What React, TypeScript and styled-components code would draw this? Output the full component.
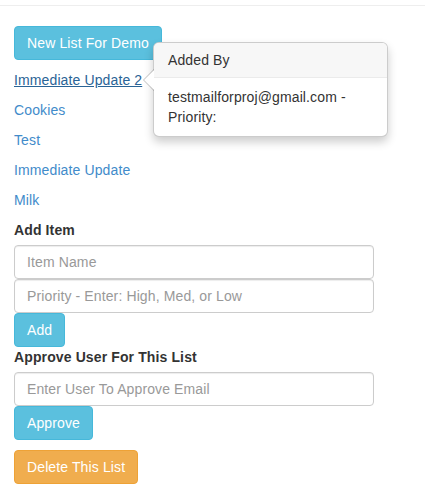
import styled, {createGlobalStyle} from 'styled-components';

const GlobalStyle = createGlobalStyle`
  body {
    margin: 0;
    font-family: "Liberation Sans", Arial, Helvetica, sans-serif;
    font-size: 14px;
    line-height: 20px;
    letter-spacing: 0.12px;
    color: #333;
    background: #fff;
  }
`;

const TopRule = styled.div`
  height: 5px;
  border-bottom: 1px solid #eee;
`;

const Page = styled.div`
  padding: 20px 14px;
`;

const Button = styled.button<{$variant?: 'info' | 'warning'; $gap?: number}>`
  display: block;
  box-sizing: border-box;
  height: 34px;
  padding: 6px 12px;
  margin: 0 0 ${(p) => p.$gap ?? 0}px;
  font-family: inherit;
  font-size: 14px;
  line-height: 20px;
  letter-spacing: inherit;
  color: #fff;
  border-radius: 4px;
  cursor: pointer;
  background: ${(p) => (p.$variant === 'warning' ? '#f0ad4e' : '#5bc0de')};
  border: 1px solid ${(p) => (p.$variant === 'warning' ? '#eea236' : '#46b8da')};
`;

const ListRow = styled.p`
  position: relative;
  margin: 0 0 10px;
  line-height: 20px;
`;

const ListLink = styled.a<{$active?: boolean}>`
  color: ${(p) => (p.$active ? '#2a6496' : '#428bca')};
  text-decoration: ${(p) => (p.$active ? 'underline' : 'none')};
  cursor: pointer;
`;

const Popover = styled.div`
  position: absolute;
  left: 139px;
  top: -28px;
  z-index: 10;
  box-sizing: border-box;
  width: 235px;
  background: #fff;
  border: 1px solid rgba(0, 0, 0, 0.2);
  border-radius: 6px;
  box-shadow: 0 5px 10px rgba(0, 0, 0, 0.2);

  &::before,
  &::after {
    content: '';
    position: absolute;
    width: 0;
    height: 0;
    border-style: solid;
    border-color: transparent;
  }
  &::before {
    left: -11px;
    top: 26px;
    border-width: 11px 11px 11px 0;
    border-right-color: rgba(0, 0, 0, 0.25);
  }
  &::after {
    left: -10px;
    top: 27px;
    border-width: 10px 10px 10px 0;
    border-right-color: #fff;
  }
`;

const PopoverTitle = styled.h3`
  margin: 0;
  padding: 8px 14px;
  font-size: 14px;
  font-weight: normal;
  line-height: 18px;
  background: #f7f7f7;
  border-bottom: 1px solid #ebebeb;
  border-radius: 5px 5px 0 0;
`;

const PopoverBody = styled.div`
  padding: 9px 14px;
  line-height: 20px;
`;

const Label = styled.label`
  display: block;
  margin-bottom: 5px;
  font-weight: bold;
  line-height: 20px;
`;

const Input = styled.input`
  display: block;
  box-sizing: border-box;
  width: 360px;
  height: 34px;
  padding: 6px 12px;
  margin: 0;
  font-family: inherit;
  font-size: 14px;
  line-height: 20px;
  letter-spacing: inherit;
  color: #555;
  background: #fff;
  border: 1px solid #ccc;
  border-radius: 4px;
  box-shadow: inset 0 1px 1px rgba(0, 0, 0, 0.075);
  outline: none;

  &::placeholder {
    color: #999;
  }
`;

const lists = ['Cookies', 'Test', 'Immediate Update', 'Milk'];

export default function App() {
  return (
    <>
      <GlobalStyle />
      <TopRule />
      <Page>
        <Button $variant="info" $gap={10}>New List For Demo</Button>
        <ListRow>
          <ListLink $active>Immediate Update 2</ListLink>
          <Popover>
            <PopoverTitle>Added By</PopoverTitle>
            <PopoverBody>testmailforproj@gmail.com - Priority:</PopoverBody>
          </Popover>
        </ListRow>
        {lists.map((name) => (
          <ListRow key={name}>
            <ListLink>{name}</ListLink>
          </ListRow>
        ))}
        <Label>Add Item</Label>
        <Input placeholder="Item Name" />
        <Input placeholder="Priority - Enter: High, Med, or Low" />
        <Button $variant="info">Add</Button>
        <Label>Approve User For This List</Label>
        <Input placeholder="Enter User To Approve Email" />
        <Button $variant="info" $gap={10}>Approve</Button>
        <Button $variant="warning">Delete This List</Button>
      </Page>
    </>
  );
}
